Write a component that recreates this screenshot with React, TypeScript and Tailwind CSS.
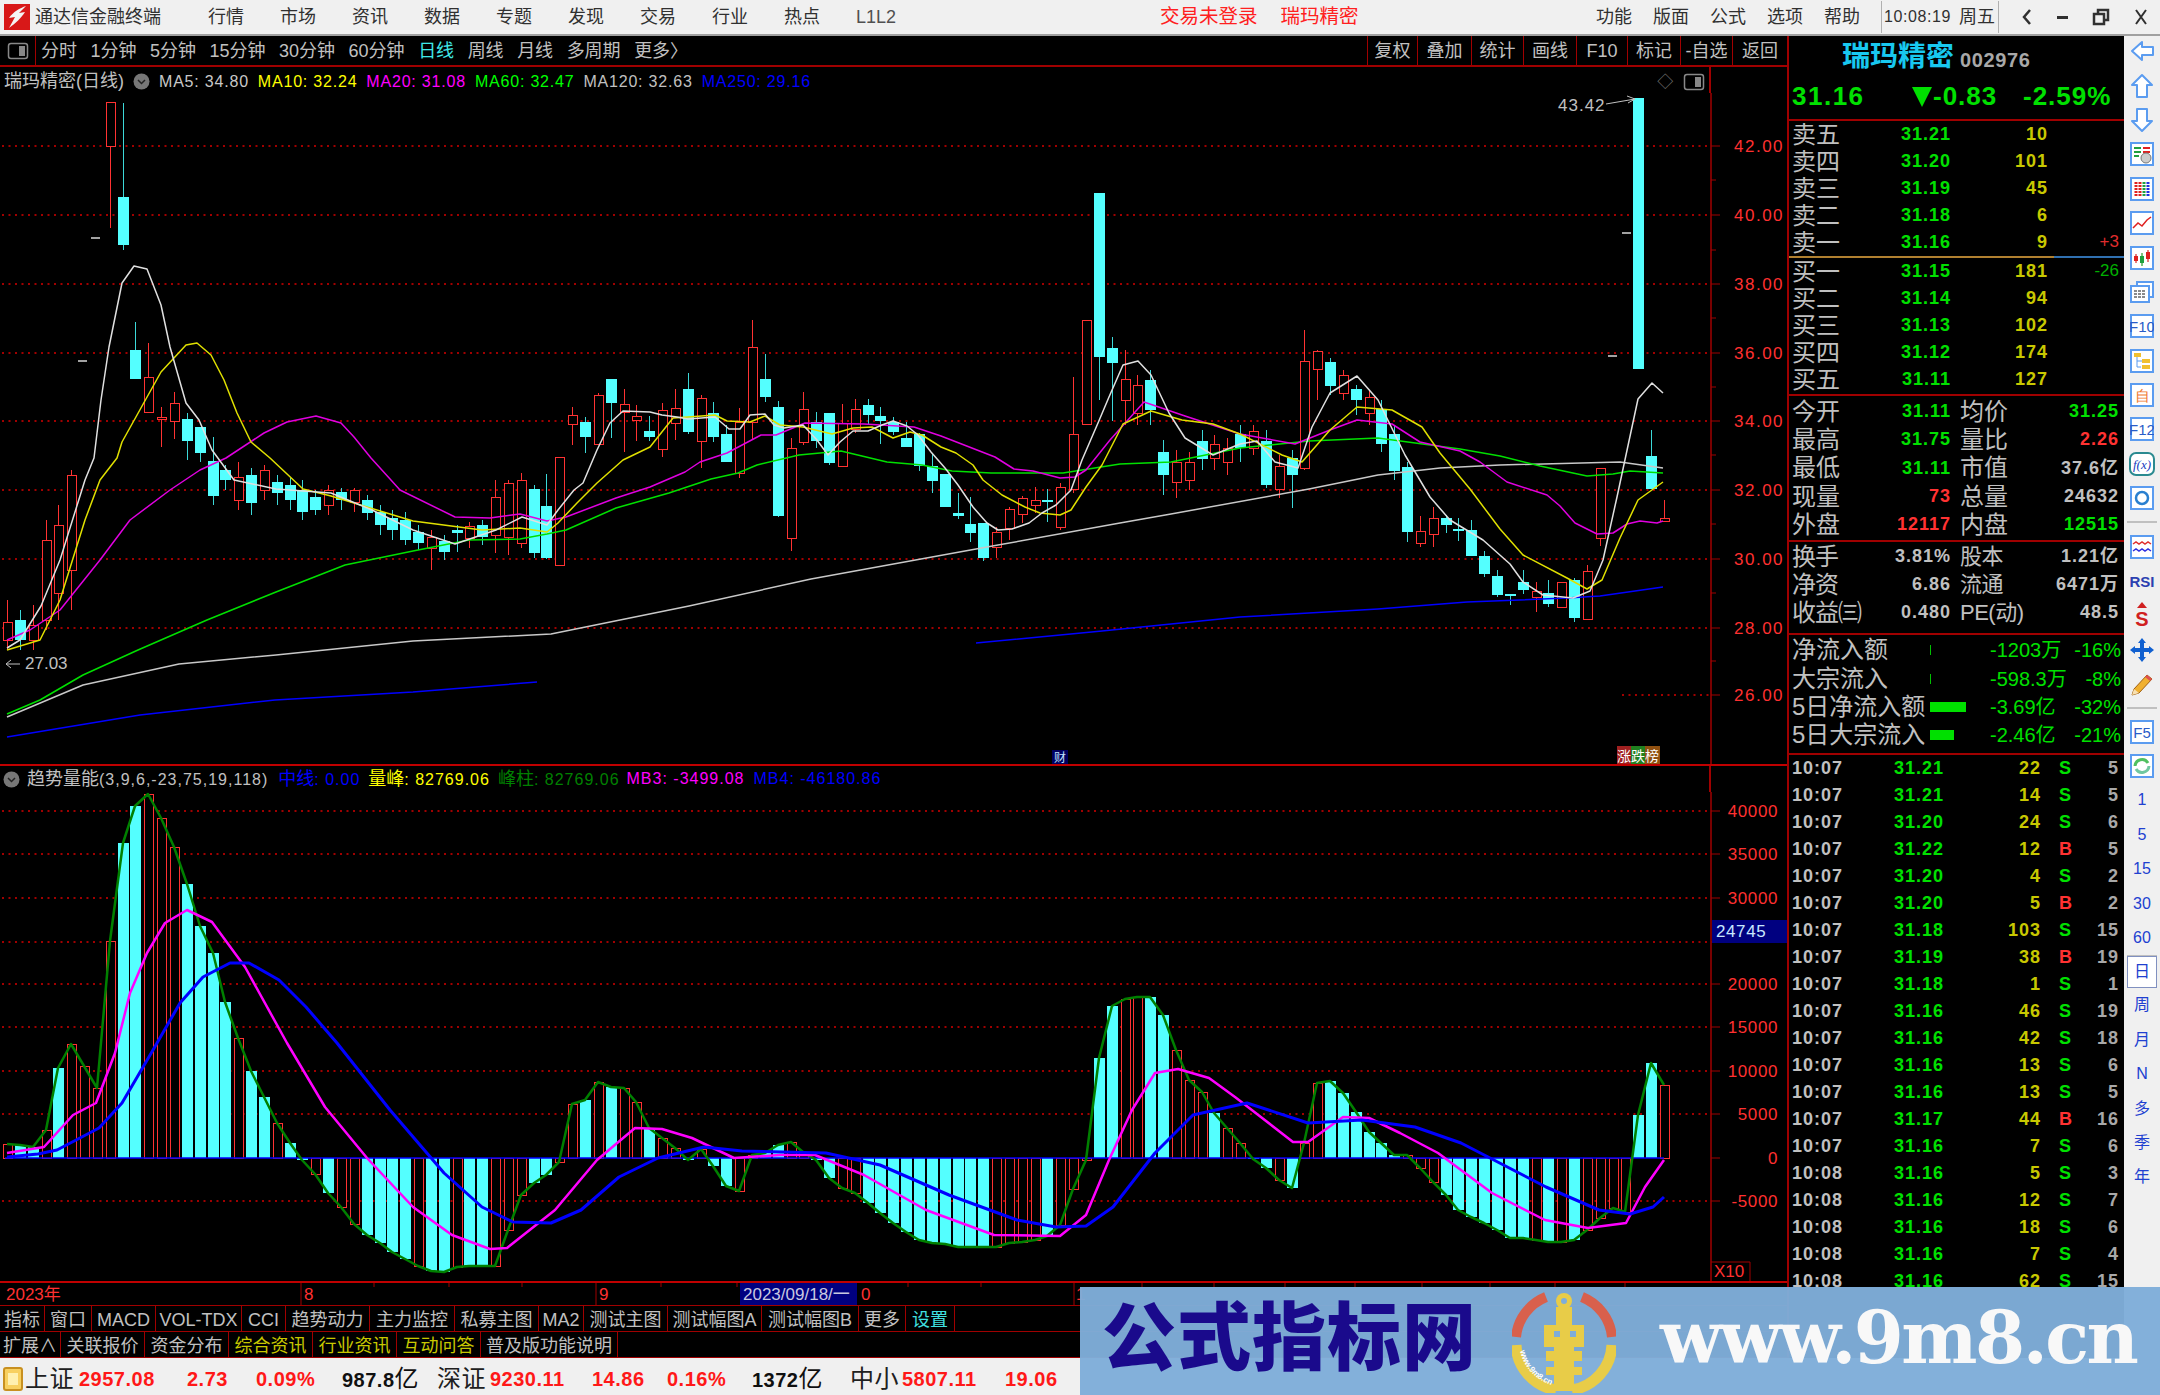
import React from "react";

const RED = "#ff3232";
const CY = "#54ffff";
const X = (i: number) => 7 + 12.845 * i;

type C = [number, number, number, number, "r" | "c"];
const candles: (C | null)[] = [
  [600,622,640,650,"r"],[610,620,640,650,"c"],[605,625,640,650,"r"],[520,540,620,630,"r"],[505,525,593,620,"r"],[470,475,570,610,"r"],
  null,null,
  [102,102,146,228,"r"],[103,197,245,250,"c"],[322,350,379,379,"c"],[343,377,412,412,"r"],[407,417,419,447,"r"],[392,403,421,439,"r"],[413,419,441,460,"c"],[427,427,453,462,"c"],
  [437,461,496,505,"c"],[465,470,480,490,"c"],[462,477,500,510,"r"],[468,475,503,515,"c"],[465,470,490,500,"r"],[475,482,493,505,"c"],[478,485,500,510,"c"],[480,490,512,520,"c"],
  [490,497,510,515,"c"],[485,490,505,515,"r"],[488,492,500,510,"c"],[488,490,502,512,"r"],[495,500,513,520,"c"],[505,512,525,535,"c"],[510,518,530,540,"c"],[512,520,540,545,"c"],
  [525,532,543,550,"c"],[530,537,548,570,"r"],[535,541,552,560,"c"],[525,530,533,552,"c"],[522,526,538,548,"r"],[520,525,537,545,"c"],[480,497,535,553,"r"],[480,483,537,555,"r"],
  [473,480,543,548,"r"],[485,489,553,558,"c"],[474,506,558,559,"c"],[457,457,565,565,"r"],[407,415,424,445,"r"],[417,422,437,453,"c"],[393,395,444,445,"r"],[379,379,403,438,"c"],
  [389,404,412,452,"r"],[405,416,420,441,"r"],[416,431,437,441,"c"],[403,410,449,457,"r"],[389,408,423,440,"r"],[373,389,432,434,"c"],[395,398,441,468,"r"],[402,413,437,442,"c"],
  [425,434,462,462,"c"],[408,422,473,478,"r"],[320,347,422,440,"r"],[354,379,397,402,"c"],[401,407,516,517,"c"],[438,448,538,551,"r"],[392,409,442,445,"r"],[412,422,441,448,"c"],
  [413,413,463,465,"c"],[404,423,466,466,"r"],[399,409,429,433,"r"],[399,405,415,425,"c"],[407,416,421,444,"c"],[417,422,432,435,"c"],[422,438,447,447,"c"],[433,434,466,471,"c"],
  [453,466,481,493,"c"],[474,474,507,507,"c"],[493,513,516,519,"c"],[497,524,533,542,"c"],[523,523,558,561,"c"],[527,532,547,558,"r"],[507,509,528,540,"r"],[496,498,514,523,"r"],
  [487,500,505,513,"r"],[489,500,502,522,"c"],[483,487,527,530,"r"],[377,434,489,493,"r"],[320,320,424,424,"r"],[193,193,357,400,"c"],[337,348,363,421,"c"],[350,379,400,425,"r"],
  [375,385,413,425,"r"],[370,380,410,425,"c"],[440,452,475,495,"c"],[450,462,482,498,"r"],[452,462,480,490,"r"],[430,441,459,470,"c"],[435,444,458,470,"r"],[438,448,462,475,"r"],
  [425,434,448,462,"c"],[425,431,448,455,"r"],[430,441,485,488,"c"],[455,466,489,498,"r"],[450,458,475,508,"c"],[330,361,468,470,"r"],[350,351,369,400,"r"],[358,362,386,395,"c"],
  [370,375,393,400,"r"],[385,389,400,415,"c"],[390,397,413,425,"r"],[400,409,444,452,"c"],[425,434,471,480,"c"],[462,467,532,542,"c"],[516,531,543,547,"r"],[507,518,534,547,"r"],
  [515,518,525,533,"c"],[518,529,531,541,"c"],[520,530,556,556,"c"],[551,556,574,577,"c"],[570,576,595,597,"c"],[594,594,595,605,"c"],[570,582,590,594,"c"],[582,591,597,612,"r"],
  [580,593,604,607,"c"],[582,582,607,607,"r"],[578,580,618,622,"c"],[565,571,619,619,"r"],[468,468,538,546,"r"],null,null,[98,98,369,369,"c"],[430,456,489,489,"c"],[500,518,521,521,"r"],
];

const poly = (p: number[][]) => p.map((a) => a.join(",")).join(" ");

const ma5 = [[7,648],[20,640],[41,606],[60,560],[85,480],[94,458],[101,400],[109,347],[122,283],[134,266],[147,269],[161,305],[170,347],[186,403],[199,420],[212,450],[234,480],[276,489],[331,493],[372,510],[413,530],[455,544],[496,530],[522,517],[547,525],[558,510],[574,490],[583,483],[597,450],[610,423],[623,411],[650,412],[662,415],[677,417],[688,419],[715,417],[729,429],[740,429],[750,415],[765,414],[774,425],[784,428],[803,425],[817,440],[828,455],[840,442],[853,431],[868,431],[882,425],[893,421],[907,426],[918,435],[931,452],[945,468],[958,485],[973,507],[987,523],[998,530],[1012,529],[1029,523],[1042,513],[1056,505],[1071,490],[1082,460],[1098,423],[1109,397],[1123,365],[1138,361],[1151,375],[1169,413],[1185,438],[1213,455],[1240,444],[1257,441],[1275,462],[1298,468],[1312,427],[1330,393],[1357,376],[1378,400],[1405,455],[1430,497],[1450,520],[1483,540],[1510,564],[1523,582],[1543,595],[1573,598],[1590,591],[1603,560],[1617,497],[1638,399],[1652,383],[1663,393]];
const ma10 = [[7,650],[40,640],[60,600],[85,520],[100,480],[117,458],[122,442],[161,372],[186,345],[197,343],[211,355],[224,380],[237,413],[251,442],[270,458],[303,489],[331,496],[413,521],[482,530],[520,528],[547,532],[558,523],[577,503],[597,483],[623,460],[650,447],[673,418],[688,417],[715,415],[727,421],[750,422],[765,416],[780,425],[803,427],[832,434],[853,428],[872,427],[893,438],[910,432],[922,435],[941,447],[956,453],[973,465],[983,480],[1002,495],[1025,507],[1040,513],[1060,515],[1071,510],[1086,487],[1102,465],[1123,424],[1151,411],[1182,420],[1213,424],[1240,434],[1282,455],[1302,462],[1330,430],[1357,407],[1392,410],[1422,427],[1440,453],[1470,489],[1500,529],[1523,555],[1567,578],[1587,589],[1602,580],[1620,538],[1638,500],[1663,482]];
const ma20 = [[7,640],[30,630],[60,610],[100,560],[130,520],[170,490],[200,470],[226,458],[264,433],[287,422],[316,416],[341,423],[354,437],[371,458],[400,490],[455,517],[490,518],[520,514],[547,521],[566,517],[616,498],[650,487],[685,472],[700,462],[727,453],[761,435],[776,435],[805,423],[864,424],[914,427],[941,436],[995,457],[1014,469],[1033,471],[1060,478],[1075,477],[1086,470],[1110,440],[1144,402],[1185,416],[1240,434],[1295,444],[1330,430],[1357,420],[1392,424],[1420,442],[1460,451],[1480,462],[1507,482],[1547,495],[1560,506],[1575,523],[1597,534],[1613,533],[1627,524],[1640,521],[1657,523],[1663,521]];
const ma60 = [[7,714],[40,700],[83,675],[138,650],[207,620],[276,592],[345,565],[413,551],[469,540],[520,539],[547,534],[566,530],[616,508],[669,493],[711,479],[738,473],[757,465],[799,455],[841,451],[887,462],[922,465],[952,471],[991,473],[1063,473],[1120,464],[1171,462],[1240,448],[1309,441],[1378,438],[1460,449],[1500,456],[1540,466],[1587,476],[1613,474],[1630,471],[1663,473]];
const ma120 = [[7,717],[83,685],[179,664],[276,655],[413,641],[551,634],[689,606],[811,579],[998,545],[1120,523],[1171,514],[1309,489],[1378,475],[1440,468],[1500,465],[1620,462],[1663,468]];
const ma250a = [[7,737],[140,715],[275,700],[413,692],[537,682]];
const ma250b = [[976,643],[1102,631],[1240,617],[1378,609],[1467,602],[1567,598],[1600,596],[1663,587]];

const prices: [string, number][] = [["42.00",146],["40.00",215],["38.00",284],["36.00",353],["34.00",421],["32.00",490],["30.00",559],["28.00",628],["26.00",695]];
const minor = [180,250,318,387,455,524,593,661];

const Upper = () => (
  <svg width="1787" height="671" viewBox="0 93 1787 671" className="block">
    {prices.map(([t, y]) => (
      <g key={t}>
        <line x1={t === "26.00" ? 1622 : 2} x2={1710} y1={y} y2={y} stroke="#a00000" strokeWidth="2" strokeDasharray="2 4.5" />
        <line x1={1711} x2={1720} y1={y} y2={y} stroke="#a00000" />
        <text x={1734} y={y + 6} fontSize="17" letterSpacing="1.5" fill="#ff3030">{t}</text>
      </g>
    ))}
    {minor.map((y) => <line key={y} x1={1711} x2={1716} y1={y} y2={y} stroke="#a00000" />)}
    <line x1={1711} x2={1711} y1={93} y2={765} stroke="#a00000" strokeWidth="1.5" />
    {candles.map((c, i) => {
      if (!c) return null;
      const x = Math.round(X(i));
      const [h, t, b, l, k] = c;
      const col = k === "r" ? RED : CY;
      return (
        <g key={i} shapeRendering="crispEdges">
          <line x1={x + 0.5} x2={x + 0.5} y1={h} y2={l} stroke={k === "r" ? "#ff3232" : "#3cd8d8"} />
          {k === "r" ? (
            <rect x={x - 4} y={t} width={9} height={Math.max(b - t, 2)} fill="#000" stroke={col} strokeWidth="1" />
          ) : (
            <rect x={x - 5} y={t} width={11} height={Math.max(b - t, 2)} fill={col} />
          )}
        </g>
      );
    })}
    {[[91,100,238],[78,87,361],[1608,1617,356],[1622,1631,233]].map((d) => (
      <line key={d[0]} x1={d[0]} x2={d[1]} y1={d[2]} y2={d[2]} stroke="#d8d8d8" strokeWidth="1.5" />
    ))}
    <g fill="none" strokeLinejoin="round">
      <polyline points={poly(ma120)} stroke="#c8c8c8" strokeWidth="1.5" />
      <polyline points={poly(ma250a)} stroke="#0000ff" strokeWidth="1.5" />
      <polyline points={poly(ma250b)} stroke="#0000ff" strokeWidth="1.5" />
      <polyline points={poly(ma60)} stroke="#00e000" strokeWidth="1.5" />
      <polyline points={poly(ma20)} stroke="#e000e0" strokeWidth="1.5" />
      <polyline points={poly(ma10)} stroke="#e0e000" strokeWidth="1.5" />
      <polyline points={poly(ma5)} stroke="#e0e0e0" strokeWidth="1.5" />
    </g>
    <text x={1558} y={111} fontSize="17" letterSpacing="1" fill="#c0c0c0">43.42</text>
    <path d="M1606 104 L1635 99 M1627 96 L1635 99 L1628 103" stroke="#c0c0c0" fill="none" />
    <path d="M6 664 L20 664 M6 664 L11 660 M6 664 L11 668" stroke="#c0c0c0" fill="none" />
    <text x={25} y={669} fontSize="17" fill="#c0c0c0">27.03</text>
    <rect x={1052} y={750} width={16} height={14} fill="#000060" />
    <text x={1054} y={762} fontSize="12" fill="#c0e0ff">财</text>
    <rect x={1617} y={746} width={14} height={18} fill="#a02020" />
    <rect x={1631} y={746} width={14} height={18} fill="#208020" />
    <rect x={1645} y={746} width={15} height={18} fill="#905010" />
    <text x={1617} y={761} fontSize="14" fill="#ffffff">涨</text>
    <text x={1631} y={761} fontSize="14" fill="#ffffff">跌</text>
    <text x={1645} y={761} fontSize="14" fill="#ffffff">榜</text>
  </svg>
);

const barsRaw = "1144r 1145c 1147c 1130r 1068c 1044r 1066r 1088r 941r 843c 806c 794r 818r 847r 884c 926c 953c 1002c 1038r 1071c 1097c 1123r 1143c 1160c 1174r 1193c 1207r 1224r 1235c 1243c 1252c 1259c 1266r 1271c 1272c 1267r 1266c 1266c 1266r 1230r 1195r 1183c 1175c 1162r 1104r 1100c 1082r 1087c 1088r 1102r 1128c 1138r 1148r 1160c 1149r 1166c 1186c 1191r 1155r 1153c 1145c 1142r 1152r 1160c 1178c 1188r 1193r 1203c 1213c 1223c 1232c 1240c 1243c 1244c 1247c 1247c 1247c 1247r 1243r 1242r 1240r 1236c 1225r 1189r 1160r 1058c 1006c 999r 997r 997c 1015c 1050r 1080r 1092r 1113c 1128r 1143r 1159c 1168c 1180r 1188c 1143r 1083r 1081c 1093c 1112c 1132c 1143c 1155c 1155r 1168r 1182r 1195c 1210c 1217c 1223c 1230c 1238c 1238c 1240r 1242c 1242r 1240c 1230r 1218r 1208r 1212r 1115c 1063c 1085r"
  .split(" ")
  .map((s) => [parseInt(s), s.endsWith("r") ? 1 : 0]);

const magenta = [[7,1153],[44,1147],[73,1115],[96,1103],[115,1053],[130,993],[147,953],[165,923],[187,910],[212,922],[245,967],[287,1043],[325,1107],[367,1158],[413,1207],[452,1235],[490,1249],[507,1248],[555,1210],[597,1160],[635,1128],[662,1129],[692,1138],[734,1158],[780,1155],[815,1155],[864,1175],[926,1210],[994,1235],[1060,1236],[1086,1215],[1109,1160],[1132,1110],[1155,1073],[1178,1069],[1209,1078],[1235,1097],[1293,1142],[1308,1142],[1343,1117],[1369,1118],[1400,1133],[1438,1153],[1492,1193],[1545,1220],[1588,1228],[1626,1223],[1645,1187],[1664,1160]];
const blue = [[7,1157],[38,1154],[57,1150],[99,1128],[122,1103],[153,1050],[180,1003],[203,977],[230,963],[249,963],[279,980],[306,1007],[337,1043],[390,1110],[444,1173],[482,1207],[513,1222],[551,1223],[581,1210],[619,1177],[658,1158],[704,1147],[742,1151],[826,1153],[880,1165],[949,1195],[1017,1220],[1056,1227],[1086,1226],[1113,1207],[1155,1153],[1193,1115],[1247,1103],[1308,1123],[1362,1120],[1415,1127],[1461,1143],[1546,1187],[1599,1210],[1630,1214],[1653,1207],[1664,1197]];

const lowerTicks: [string, number][] = [["40000",811],["35000",854],["30000",898],["25000",942],["20000",984],["15000",1027],["10000",1071],["5000",1114],["0",1158],["-5000",1201]];

const Lower = () => (
  <svg width="1787" height="489" viewBox="0 792 1787 489" className="block">
    {lowerTicks.map(([t, y]) => (
      <g key={t}>
        {t !== "0" && <line x1={2} x2={1710} y1={y} y2={y} stroke="#a00000" strokeWidth="2" strokeDasharray="2 4.5" />}
        <line x1={1711} x2={1720} y1={y} y2={y} stroke="#a00000" />
        {t !== "25000" && <text x={1778} y={y + 6} textAnchor="end" fontSize="17" letterSpacing="0.6" fill="#ff3030">{t}</text>}
      </g>
    ))}
    <line x1={1711} x2={1711} y1={792} y2={1282} stroke="#a00000" strokeWidth="1.5" />
    {barsRaw.map(([y, r], i) => {
      const x = Math.round(X(i));
      const top = Math.min(y, 1158);
      const h = Math.abs(y - 1158);
      return r ? (
        <rect key={i} x={x - 4} y={top} width={9} height={Math.max(h, 1)} fill="#000" stroke={RED} shapeRendering="crispEdges" />
      ) : (
        <rect key={i} x={x - 5} y={top} width={11} height={Math.max(h, 1)} fill={CY} shapeRendering="crispEdges" />
      );
    })}
    <line x1={5} x2={1664} y1={1158} y2={1158} stroke="#0000ff" strokeWidth="1.5" />
    <g fill="none" strokeLinejoin="round">
      <polyline points={poly(barsRaw.map(([y], i) => [Math.round(X(i)), y]))} stroke="#008000" strokeWidth="2.5" />
      <polyline points={poly(magenta)} stroke="#ff00ff" strokeWidth="2.5" />
      <polyline points={poly(blue)} stroke="#0000ff" strokeWidth="3" />
    </g>
    <rect x={1712} y={920} width={75} height={23} fill="#000080" />
    <text x={1716} y={937} fontSize="17" letterSpacing="0.6" fill="#c8e8ff">24745</text>
    <path d="M1711 1262 H1750 V1281" stroke="#a00000" fill="none" />
    <text x={1714} y={1277} fontSize="17" fill="#ff3030">X10</text>
  </svg>
);

const DateAxis = () => (
  <svg width="1787" height="22" viewBox="0 1283 1787 22" className="block">
    {[301,596,1074].map((x) => <line key={x} x1={x} x2={x} y1={1283} y2={1305} stroke="#a00000" />)}
    {[374,449,522,661,737,908,981,1142,1214,1285,1355,1422,1490,1555,1625].map((x) => <line key={x} x1={x} x2={x} y1={1283} y2={1287} stroke="#a00000" />)}
    <text x={6} y={1300} fontSize="17" fill="#ff3030">2023年</text>
    <text x={304} y={1300} fontSize="17" fill="#ff3030">8</text>
    <text x={599} y={1300} fontSize="17" fill="#ff3030">9</text>
    <rect x={740} y={1283} width={117} height={22} fill="#000080" />
    <text x={743} y={1300} fontSize="17" fill="#c8c8e0">2023/09/18/一</text>
    <text x={861} y={1300} fontSize="17" fill="#ff3030">0</text>
    <text x={1076} y={1300} fontSize="17" fill="#ff3030">1</text>
  </svg>
);

const Toggle = () => (
  <svg width="22" height="18" viewBox="0 0 22 18"><rect x="1.5" y="1.5" width="19" height="15" rx="2.5" fill="none" stroke="#888" strokeWidth="1.5" /><rect x="12" y="4" width="6" height="10" fill="#888" /></svg>
);
const Chev = () => (
  <svg width="17" height="17" viewBox="0 0 17 17"><circle cx="8.5" cy="8.5" r="8" fill="#777" /><path d="M5 7 L8.5 10.5 L12 7" stroke="#222" strokeWidth="1.5" fill="none" /></svg>
);

const tools = ["分时","1分钟","5分钟","15分钟","30分钟","60分钟","日线","周线","月线","多周期","更多〉"];
const toolR: [string, string][] = [["复权","w-[50px]"],["叠加","w-[54px]"],["统计","w-[52px]"],["画线","w-[53px]"],["F10","w-[51px]"],["标记","w-[53px]"],["-自选","w-[52px]"],["返回","w-[55px]"]];

const row1: [string, string, string?][] = [["指标","w-[45px]"],["窗口","w-[47px]"],["MACD","w-[64px]"],["VOL-TDX","w-[86px]"],["CCI","w-[44px]"],["趋势动力","w-[84px]"],["主力监控","w-[85px]"],["私募主图","w-[84px]"],["MA2","w-[45px]"],["测试主图","w-[84px]"],["测试幅图A","w-[94px]"],["测试幅图B","w-[97px]"],["更多","w-[47px]"],["设置","w-[49px]","text-[#40e0e0]"]];
const row2: [string, string, string?][] = [["扩展∧","w-[61px]"],["关联报价","w-[84px]"],["资金分布","w-[84px]"],["综合资讯","w-[84px]","text-[#c8c800]"],["行业资讯","w-[84px]","text-[#c8c800]"],["互动问答","w-[84px]","text-[#c8c800]"],["普及版功能说明","w-[137px]"]];

const BtnRow = ({ items, cls }: { items: [string, string, string?][]; cls: string }) => (
  <div className={"flex text-[18px] text-[#c0c0c0] border-b border-[#a00000] " + cls}>
    {items.map(([t, w, c]) => (
      <div key={t} className={"flex items-center justify-center whitespace-nowrap border-r border-[#a00000] pt-[3px] " + w + " " + (c || "")}>{t}</div>
    ))}
  </div>
);

const Q = ({ l, p, q, d, dc }: { l: string; p: string; q: string; d?: string; dc?: string }) => (
  <div className="flex h-[27px] shrink-0 items-center pl-[3px]">
    <div className="w-[100px] text-[24px] leading-[27px] text-[#c0c0c0]">{l}</div>
    <div className="w-[59px] text-right text-[18px] font-bold tracking-[1px] text-[#00e000]">{p}</div>
    <div className="w-[97px] text-right text-[18px] font-bold tracking-[1px] text-[#c8c800]">{q}</div>
    <div className={"w-[71px] text-right text-[17px] " + (dc || "")}>{d}</div>
  </div>
);

const sells: [string, string, string, string?, string?][] = [["卖五","31.21","10"],["卖四","31.20","101"],["卖三","31.19","45"],["卖二","31.18","6"],["卖一","31.16","9","+3","text-[#e02c2c]"]];
const buys: [string, string, string, string?, string?][] = [["买一","31.15","181","-26","text-[#00b000]"],["买二","31.14","94"],["买三","31.13","102"],["买四","31.12","174"],["买五","31.11","127"]];

const G = "text-[#00e000]", R = "text-[#ff3232]", W = "text-[#c0c0c0]";
const info: [string, string, string, string, string, string][] = [
  ["今开","31.11",G,"均价","31.25",G],["最高","31.75",G,"量比","2.26",R],["最低","31.11",G,"市值","37.6亿",W],["现量","73",R,"总量","24632",W],["外盘","12117",R,"内盘","12515",G],
];
const info2: [string, string, string, string][] = [["换手","3.81%","股本","1.21亿"],["净资","6.86","流通","6471万"],["收益㈢","0.480","PE(动)","48.5"]];
const flows: [string, number, string, string][] = [["净流入额",1,"-1203万","-16%"],["大宗流入",1,"-598.3万","-8%"],["5日净流入额",36,"-3.69亿","-32%"],["5日大宗流入",24,"-2.46亿","-21%"]];
const ticks: [string, string, string, string, string][] = [
  ["10:07","31.21","22","S","5"],["10:07","31.21","14","S","5"],["10:07","31.20","24","S","6"],["10:07","31.22","12","B","5"],["10:07","31.20","4","S","2"],["10:07","31.20","5","B","2"],["10:07","31.18","103","S","15"],["10:07","31.19","38","B","19"],["10:07","31.18","1","S","1"],["10:07","31.16","46","S","19"],["10:07","31.16","42","S","18"],["10:07","31.16","13","S","6"],["10:07","31.16","13","S","5"],["10:07","31.17","44","B","16"],["10:07","31.16","7","S","6"],["10:08","31.16","5","S","3"],["10:08","31.16","12","S","7"],["10:08","31.16","18","S","6"],["10:08","31.16","7","S","4"],["10:08","31.16","62","S","15"],
];

const Fr = ({ children, rx = 0 }: { children?: React.ReactNode; rx?: number }) => (
  <svg width="24" height="24" viewBox="0 0 24 24">
    <rect x="1" y="1" width="22" height="22" rx={rx} fill="#fff" stroke="#5b9cf0" strokeWidth="2" />
    {children}
  </svg>
);
const Fk = ({ t, c = "#2a5cc8" }: { t: string; c?: string }) => (
  <Fr><text x="12" y="18" textAnchor="middle" fontSize="15" fill={c} fontFamily="Liberation Sans">{t}</text></Fr>
);
const Ar = ({ d }: { d: string }) => (
  <svg width="26" height="26" viewBox="0 0 26 26"><path d={d} fill="#fff" stroke="#5b9cf0" strokeWidth="2" strokeLinejoin="round" /></svg>
);

const side: React.ReactNode[] = [
  <Ar d="M3 13 L13 4 V9 H24 V17 H13 V22 Z" />,
  <Ar d="M13 2 L23 12 H18 V24 H8 V12 H3 Z" />,
  <Ar d="M13 24 L23 14 H18 V2 H8 V14 H3 Z" />,
  <Fr><path d="M4 6h7M4 10h7M4 14h5" stroke="#20a040" strokeWidth="2" /><path d="M13 6h7M13 10h7" stroke="#e02020" strokeWidth="2" /><circle cx="16" cy="16" r="5" fill="#ccc" stroke="#777" /></Fr>,
  <Fr><path d="M6 5v14" stroke="#e02020" strokeWidth="3" strokeDasharray="2 1" /><path d="M10 5v14" stroke="#e02020" strokeWidth="3" strokeDasharray="2 1" /><path d="M14 5v14" stroke="#20a040" strokeWidth="3" strokeDasharray="2 1" /><path d="M18 5v14" stroke="#2030e0" strokeWidth="3" strokeDasharray="2 1" /></Fr>,
  <Fr><path d="M3 17 L8 12 L12 15 L17 9 L21 6" stroke="#e02020" strokeWidth="1.5" fill="none" /></Fr>,
  <Fr><path d="M6 8v9" stroke="#c00" /><rect x="4" y="10" width="4" height="5" fill="#e02020" /><path d="M12 7v13" stroke="#080" /><rect x="10" y="10" width="4" height="7" fill="#20a040" /><path d="M18 4v12" stroke="#c00" /><rect x="16" y="6" width="4" height="7" fill="#e02020" /></Fr>,
  <svg width="26" height="24" viewBox="0 0 26 24"><rect x="8" y="2" width="16" height="15" fill="#fff" stroke="#5b9cf0" strokeWidth="2" /><rect x="2" y="6" width="18" height="16" fill="#fff" stroke="#5b9cf0" strokeWidth="2" /><path d="M5 11h12M5 14h12M5 17h12" stroke="#666" strokeWidth="1.5" strokeDasharray="3 1" /></svg>,
  <Fk t="F10" />,
  <Fr><rect x="4" y="4" width="7" height="4" fill="#f0c030" /><path d="M7 8v10h4M7 12h5" stroke="#5b9cf0" fill="none" /><rect x="12" y="10" width="8" height="4" fill="#f0c030" /><rect x="12" y="16" width="8" height="4" fill="#f0c030" /></Fr>,
  <Fk t="自" c="#f07830" />,
  <Fk t="F12" />,
  <svg width="26" height="24" viewBox="0 0 26 24"><rect x="1" y="1" width="24" height="22" rx="6" fill="#fff" stroke="#2a8a90" strokeWidth="2" /><text x="13" y="17" textAnchor="middle" fontSize="13" fontStyle="italic" fill="#2040c0" fontFamily="Liberation Serif">f(x)</text></svg>,
  <Fr><circle cx="12" cy="12" r="6" fill="none" stroke="#2a80d0" strokeWidth="2.5" /></Fr>,
];
const side2: React.ReactNode[] = [
  <Fr><path d="M3 9 l3-2 3 2 3-2 3 2 3-2 3 2" stroke="#e03030" strokeWidth="1.5" fill="none" /><path d="M3 16 l3-2 3 2 3-2 3 2 3-2 3 2" stroke="#3030e0" strokeWidth="1.5" fill="none" /></Fr>,
  <svg width="30" height="20" viewBox="0 0 30 20"><text x="15" y="16" textAnchor="middle" fontSize="15" fontWeight="700" fill="#2c40b0" fontFamily="Liberation Sans">RSI</text></svg>,
  <svg width="26" height="28" viewBox="0 0 26 28"><path d="M13 1 L18 7 H8 Z" fill="#d02020" /><text x="13" y="25" textAnchor="middle" fontSize="20" fontWeight="700" fill="#d02020" fontFamily="Liberation Sans">S</text></svg>,
  <svg width="26" height="26" viewBox="0 0 26 26" fill="#1060d0"><path d="M13 1 L17 6 H9 Z M13 25 L9 20 H17 Z M1 13 L6 9 V17 Z M25 13 L20 17 V9 Z" /><rect x="11" y="6" width="4" height="14" /><rect x="6" y="11" width="14" height="4" /></svg>,
  <svg width="26" height="26" viewBox="0 0 26 26"><path d="M5 18 L18 4 L23 8 L10 22 L3 24 Z" fill="#f0b030" stroke="#a06010" /><path d="M5 18 L10 22 L3 24 Z" fill="#f8e0b0" /><path d="M18 4 L23 8 L21 10 L16 6 Z" fill="#e05050" /></svg>,
];
const sideTxt = ["1","5","15","30","60"];
const sideTxt2 = ["周","月","N","多","季","年"];

const Logo = () => (
  <svg width="26" height="26" viewBox="0 0 26 26">
    <rect width="26" height="26" fill="#d81818" />
    <path d="M22 2 C16 4 9 8 5 14 L11 13 L5 24 C11 20 18 13 21 8 L15 9 Z" fill="#f4f4f4" />
  </svg>
);

const Mark = () => (
  <svg width="104" height="104" viewBox="0 0 104 104">
    <defs><path id="ring" d="M8 62 A46 46 0 0 0 62 97" /></defs>
    <path d="M4 48 A48 48 0 0 1 34 8" fill="none" stroke="#d8604c" strokeWidth="10" />
    <path d="M70 8 A48 48 0 0 1 100 48" fill="none" stroke="#d8604c" strokeWidth="10" />
    <path d="M100 56 A48 48 0 0 1 60 101" fill="none" stroke="#e8cc48" strokeWidth="11" />
    <path d="M4 56 A48 48 0 0 0 44 101" fill="none" stroke="#e8cc48" strokeWidth="11" />
    <g fill="#e8cc48">
      <circle cx="52" cy="12" r="8" /><rect x="44" y="18" width="16" height="20" />
      <rect x="32" y="36" width="40" height="22" /><rect x="42" y="56" width="20" height="46" />
      <rect x="34" y="62" width="36" height="10" /><rect x="34" y="78" width="36" height="8" />
    </g>
    <circle cx="52" cy="12" r="3" fill="#7fadd9" />
    <rect x="42" y="42" width="6" height="6" fill="#7fadd9" /><rect x="58" y="42" width="6" height="6" fill="#7fadd9" />
    <text fontSize="8" fill="#fff" fontWeight="700"><textPath href="#ring">www.9m8.cn</textPath></text>
  </svg>
);

export default function App() {
  return (
    <div className="relative flex h-[1395px] w-[2160px] flex-col overflow-hidden bg-black font-['Liberation_Sans','Noto_Sans_CJK_SC',sans-serif]">
      {/* title bar */}
      <div className="flex h-[36px] shrink-0 items-center border-b-2 border-[#a0a0a0] bg-[#f0f0f0] text-[18px] text-[#303030]">
        <div className="ml-[4px] mr-[5px]"><Logo /></div>
        <div className="w-[173px] whitespace-nowrap">通达信金融终端</div>
        {["行情","市场","资讯","数据","专题","发现","交易","行业","热点"].map((t) => <div key={t} className="w-[72px]">{t}</div>)}
        <div className="w-[40px] text-[#505050]">L1L2</div>
        <div className="ml-[264px] text-[19.5px] text-[#ff2020]">交易未登录</div>
        <div className="ml-[23px] text-[19.5px] text-[#ff2020]">瑞玛精密</div>
        <div className="ml-auto flex items-center">
          {["功能","版面","公式","选项","帮助"].map((t) => <div key={t} className="mr-[21px]">{t}</div>)}
          <div className="flex h-[32px] items-center border-x border-[#b0b0b0] pl-[2px] pr-[3px]">
            <span className="mr-[8px] text-[16px] tracking-[0.6px]">10:08:19</span><span>周五</span>
          </div>
          <div className="flex w-[161px] items-center justify-between pl-[22px] pr-[12px]">
            <svg width="12" height="18" viewBox="0 0 12 18"><path d="M9 2 L3 9 L9 16" stroke="#303030" strokeWidth="2.5" fill="none" /></svg>
            <div className="h-[3px] w-[11px] bg-[#303030]" />
            <svg width="18" height="18" viewBox="0 0 18 18"><rect x="6" y="2" width="10" height="10" fill="none" stroke="#303030" strokeWidth="2.5" /><rect x="2" y="6" width="10" height="10" fill="#f0f0f0" stroke="#303030" strokeWidth="2.5" /></svg>
            <svg width="14" height="18" viewBox="0 0 14 18"><path d="M2 2 L12 16 M12 2 L2 16" stroke="#303030" strokeWidth="2" /></svg>
          </div>
        </div>
      </div>

      {/* middle */}
      <div className="flex min-h-0 flex-1">
        <div className="flex w-[1787px] shrink-0 flex-col">
          {/* toolbar */}
          <div className="flex h-[31px] shrink-0 items-center border-b-2 border-[#a00000] text-[18px] text-[#c0c0c0]">
            <div className="flex h-full w-[36px] items-center justify-center border-r border-[#a00000]"><Toggle /></div>
            <div className="flex gap-[13.5px] pl-[5px] pt-[2px]">
              {tools.map((t) => <span key={t} className={t === "日线" ? "text-[#40e8e8]" : ""}>{t}</span>)}
            </div>
            <div className="ml-auto flex h-full">
              {toolR.map(([t, w]) => <div key={t} className={"flex items-center justify-center border-l border-[#a00000] pt-[2px] " + w}>{t}</div>)}
            </div>
          </div>

          {/* upper chart */}
          <div className="flex h-[26px] shrink-0">
            <div className="flex w-[1711px] items-center gap-[9px] border-r-2 border-[#a00000] pl-[4px] pt-[3px] text-[16px] tracking-[0.8px]">
              <span className="text-[18px] tracking-normal text-[#c0c0c0]">瑞玛精密(日线)</span>
              <Chev />
              <span className="text-[#c8c8c8]">MA5: 34.80</span>
              <span className="text-[#ffff00]">MA10: 32.24</span>
              <span className="text-[#ff00ff]">MA20: 31.08</span>
              <span className="text-[#00ff00]">MA60: 32.47</span>
              <span className="text-[#c0c0c0]">MA120: 32.63</span>
              <span className="text-[#0000ff]">MA250: 29.16</span>
              <span className="ml-auto text-[16px] text-[#777]">◇</span>
              <span className="mr-[4px]"><Toggle /></span>
            </div>
          </div>
          <div className="border-b-2 border-[#c00000]"><Upper /></div>

          {/* lower chart */}
          <div className="flex h-[26px] shrink-0">
            <div className="flex w-[1711px] items-center border-r-2 border-[#a00000] pl-[3px] text-[16px] tracking-[1px]">
              <Chev />
              <span className="ml-[7px] whitespace-nowrap text-[#c0c0c0]"><span className="text-[18px] tracking-normal">趋势量能</span>(3,9,6,-23,75,19,118)</span>
              <span className="ml-[10px] text-[#0000ff]"><span className="text-[18px] tracking-normal">中线</span>: 0.00</span>
              <span className="ml-[8px] text-[#ffff00]"><span className="text-[18px] tracking-normal">量峰</span>: 82769.06</span>
              <span className="ml-[8px] text-[#008000]"><span className="text-[18px] tracking-normal">峰柱</span>: 82769.06</span>
              <span className="ml-[7px] text-[#ff00ff]">MB3: -3499.08</span>
              <span className="ml-[9px] text-[#0000ff]">MB4: -46180.86</span>
            </div>
          </div>
          <div className="border-b-2 border-[#c00000]"><Lower /></div>
          <div className="border-b border-[#a00000]"><DateAxis /></div>
          <BtnRow items={row1} cls="h-[26px] shrink-0" />
          <BtnRow items={row2} cls="h-[26px] shrink-0" />
        </div>

        {/* right panel */}
        <div className="flex w-[337px] shrink-0 flex-col overflow-hidden border-l-2 border-[#a00000] text-[#c0c0c0]">
          <div className="flex h-[39px] shrink-0 items-end pl-[53px]">
            <span className="text-[28px] font-bold leading-[36px] text-[#18c8f0]">瑞玛精密</span>
            <span className="ml-[6px] text-[20px] font-bold tracking-[0.6px] text-[#a8a8a8]">002976</span>
          </div>
          <div className="flex h-[45.5px] shrink-0 items-center border-b-2 border-[#a00000] pl-[3px] text-[26px] font-bold text-[#00e000]">
            <span className="w-[120px] tracking-[1.5px]">31.16</span>
            <svg width="20" height="20" viewBox="0 0 20 20"><path d="M0 0 H20 L10 20 Z" fill="#00e000" /></svg>
            <span className="ml-[1px] w-[90px] tracking-[1px]">-0.83</span>
            <span className="tracking-[1px]">-2.59%</span>
          </div>
          {sells.map(([l, p, q, d, dc]) => <Q key={l} l={l} p={p} q={q} d={d} dc={dc} />)}
          <div className="flex h-[2px] shrink-0"><div className="w-[265px] bg-[#b08030]" /><div className="flex-1 bg-[#3070b0]" /></div>
          {buys.map(([l, p, q, d, dc]) => <Q key={l} l={l} p={p} q={q} d={d} dc={dc} />)}
          <div className="mt-[1px] shrink-0 border-b-2 border-[#a00000]" />
          <div className="shrink-0 pb-[1px] pt-[2px]">
            {info.map(([a, b, bc, c, d, dc]) => (
              <div key={a} className="flex h-[28.3px] items-center pl-[3px]">
                <div className="w-[100px] text-[24px]">{a}</div>
                <div className={"w-[59px] text-right text-[18px] font-bold tracking-[1px] " + bc}>{b}</div>
                <div className="ml-[9px] w-[60px] text-[24px]">{c}</div>
                <div className={"w-[99px] text-right text-[18px] font-bold tracking-[1px] " + dc}>{d}</div>
              </div>
            ))}
          </div>
          <div className="shrink-0 border-b-2 border-[#a00000]" />
          <div className="shrink-0 pb-[6px] pt-[1px]">
            {info2.map(([a, b, c, d]) => (
              <div key={a} className="flex h-[28px] items-center pl-[3px]">
                <div className="w-[100px] whitespace-nowrap text-[24px] tracking-[-1px]">{a}</div>
                <div className="w-[59px] whitespace-nowrap text-right text-[18px] font-bold tracking-[1px]">{b}</div>
                <div className="ml-[9px] w-[60px] whitespace-nowrap text-[22px] tracking-[-0.5px]">{c}</div>
                <div className="w-[99px] text-right text-[18px] font-bold tracking-[1px]">{d}</div>
              </div>
            ))}
          </div>
          <div className="shrink-0 border-b-2 border-[#a00000]" />
          <div className="shrink-0 pb-[3px] pt-[1px]">
            {flows.map(([a, w, v, p]) => (
              <div key={a} className="flex h-[28.4px] items-center pl-[3px] text-[#00e000]">
                <div className="w-[138px] whitespace-nowrap text-[24px] text-[#c0c0c0]">{a}</div>
                <div className="w-[60px]"><div className={w > 1 ? "h-[10px] bg-[#00e000]" : "h-[10px] bg-[#00c000]"} style={{ width: w }} /></div>
                <div className="w-[63px] whitespace-nowrap text-right text-[20px]">{v}</div>
                <div className="w-[68px] text-right text-[20px]">{p}</div>
              </div>
            ))}
          </div>
          <div className="shrink-0 border-b-2 border-[#a00000]" />
          {ticks.map(([t, p, q, s, n], i) => (
            <div key={i} className="flex h-[27px] shrink-0 items-center pl-[3px] text-[18px] font-bold tracking-[1px]">
              <div className="w-[90px] text-[#c0c0c0]">{t}</div>
              <div className="w-[62px] text-right text-[#00e000]">{p}</div>
              <div className="w-[97px] text-right text-[#c8c800]">{q}</div>
              <div className={"w-[30px] pl-[18px] " + (s === "S" ? "text-[#00e000]" : "text-[#ff3232]")}>{s}</div>
              <div className="w-[48px] text-right text-[#a8a8a8]">{n}</div>
            </div>
          ))}
        </div>

        {/* sidebar */}
        <div className="flex flex-1 flex-col items-center bg-[#f0f0f0] text-[16px] text-[#2040d0]">
          <div className="h-[0px] shrink-0 -mt-[2px]" />
          {side.map((s, i) => <div key={i} className="flex h-[34.4px] shrink-0 items-center justify-center">{s}</div>)}
          <div className="flex h-[14px] w-[30px] shrink-0 items-center"><div className="h-[2px] w-full bg-[#c0c0c0]" /></div>
          {side2.map((s, i) => <div key={i} className="flex h-[34.4px] shrink-0 items-center justify-center">{s}</div>)}
          <div className="flex h-[13px] w-[30px] shrink-0 items-center"><div className="h-[2px] w-full bg-[#c0c0c0]" /></div>
          <div className="flex h-[34.4px] shrink-0 items-center justify-center"><Fk t="F5" /></div>
          <div className="flex h-[34.4px] shrink-0 items-center justify-center">
            <Fr><path d="M5 12 A7 7 0 0 1 18 9" stroke="#50c060" strokeWidth="3" fill="none" /><path d="M19 12 A7 7 0 0 1 6 15" stroke="#70c8a0" strokeWidth="3" fill="none" /></Fr>
          </div>
          {sideTxt.map((t) => <div key={t} className="flex h-[34.4px] shrink-0 items-center justify-center">{t}</div>)}
          <div className="flex h-[1px] w-[30px] shrink-0 bg-[#c0c0c0]" />
          <div className="flex h-[32px] w-[30px] shrink-0 items-center justify-center border border-[#8090c0] bg-white">日</div>
          {sideTxt2.map((t) => <div key={t} className="flex h-[34.4px] shrink-0 items-center justify-center">{t}</div>)}
        </div>
      </div>

      {/* status bar */}
      <div className="flex h-[37px] shrink-0 items-center bg-[#f0f0f0] pt-[5px] text-[20px] font-bold tracking-[0.5px] text-[#ff1818]">
        <div className="flex w-[25px] justify-center">
          <svg width="20" height="24" viewBox="0 0 20 24"><rect x="1" y="1" width="18" height="22" rx="2" fill="#f8d060" stroke="#c89020" strokeWidth="2" /><rect x="5" y="6" width="10" height="12" fill="#fff0b0" /></svg>
        </div>
        <div className="w-[54px] text-[24px] font-normal text-[#202020]">上证</div>
        <div className="w-[108px]">2957.08</div>
        <div className="w-[69px]">2.73</div>
        <div className="w-[86px]">0.09%</div>
        <div className="w-[95px] whitespace-nowrap text-[#101010]">987.8<span className="text-[24px] font-normal">亿</span></div>
        <div className="w-[53px] text-[24px] font-normal text-[#202020]">深证</div>
        <div className="w-[102px]">9230.11</div>
        <div className="w-[75px]">14.86</div>
        <div className="w-[85px]">0.16%</div>
        <div className="w-[98px] whitespace-nowrap text-[#101010]">1372<span className="text-[24px] font-normal">亿</span></div>
        <div className="w-[52px] text-[24px] font-normal text-[#202020]">中小</div>
        <div className="w-[103px]">5807.11</div>
        <div>19.06</div>
      </div>

      {/* watermark */}
      <div className="absolute bottom-0 right-0 flex h-[108px] w-[1080px] items-center bg-[#7fadd9]/[0.97]">
        <div className="mb-[4px] ml-[22px] w-[376px] whitespace-nowrap text-[74px] font-black leading-none tracking-[1px] text-[#1a0a8c]">公式指标网</div>
        <div className="ml-[34px]"><Mark /></div>
        <div className="mb-[6px] ml-[44px] whitespace-nowrap font-['DejaVu_Serif',serif] text-[72px] font-bold leading-none tracking-[-2.5px] text-[#f8f8f8]">www.9m8.cn</div>
      </div>
    </div>
  );
}
